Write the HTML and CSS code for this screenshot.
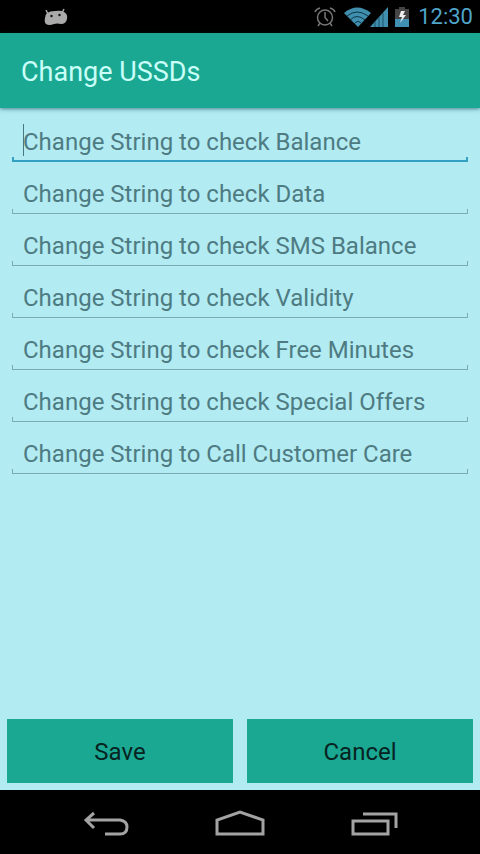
FILE: index.html
```
<!DOCTYPE html>
<html lang="en">
<head>
<meta charset="utf-8">
<meta name="viewport" content="width=device-width, initial-scale=1">
<title>Change USSDs</title>
<link rel="stylesheet" href="styles.css">
</head>
<body>
<div class="status-bar">
  <svg class="notification" width="24" height="18" viewBox="0 0 24 18" aria-hidden="true">
    <path d="M2 2L4 6M20 1L18 5" stroke="#aaa" stroke-width="1.500" fill="none"/>
    <path d="M3 5Q6 3 11 3Q17 2 20 4Q24 6 23 11Q22 16 17 16Q13 15 10 16Q5 18 2 16Q0 14 1 10Q1 7 3 5Z" fill="#aaa"/>
    <circle cx="7.500" cy="8" r="1.200" fill="#111"/><circle cx="15.500" cy="7" r="1.200" fill="#111"/>
  </svg>
  <div class="indicators">
    <svg width="22" height="20" viewBox="0 0 22 20" fill="none" stroke="#777" stroke-width="1.5" aria-hidden="true">
      <circle cx="11" cy="10.500" r="7.500"/><path d="M11 5V10.500L14 14M1 5Q2 2 6 1M16 1Q20 2 21 5M6 16L4 19M16 16L18 19"/>
    </svg>
    <svg class="signals" width="46" height="22" viewBox="0 0 46 22" aria-hidden="true">
      <path d="M0 7Q13-4 27 7L14 21Z" fill="#408faf"/>
      <path d="M3 10Q13 2 24 10M6 14Q13 7 21 14M10 18Q14 13 18 18" fill="none" stroke="#0c3547" stroke-width="1"/>
      <path d="M26 21L44 1V21Z" fill="#408faf"/>
      <path d="M31 15V21M35 11V21M39 7V21" stroke="#1c5066" stroke-width="1"/>
    </svg>
    <svg class="battery" width="14" height="20" viewBox="0 0 14 20" aria-hidden="true">
      <path d="M0 2H4V0H10V2H14V20H0Z" fill="#454545"/><path d="M0 12H14V20H0Z" fill="#4090b3"/>
      <path d="M6 4H10L8 8H11L5 16L7 10H4Z" fill="#eee"/>
    </svg>
    <time>12:30</time>
  </div>
</div>
<header class="title-bar"><h1>Change USSDs</h1></header>
<form class="screen">
  <div class="fields">
    <div class="field active"><input type="text" aria-label="Change String to check Balance" placeholder="Change String to check Balance"></div>
    <div class="field"><input type="text" aria-label="Change String to check Data" placeholder="Change String to check Data"></div>
    <div class="field"><input type="text" aria-label="Change String to check SMS Balance" placeholder="Change String to check SMS Balance"></div>
    <div class="field"><input type="text" aria-label="Change String to check Validity" placeholder="Change String to check Validity"></div>
    <div class="field"><input type="text" aria-label="Change String to check Free Minutes" placeholder="Change String to check Free Minutes"></div>
    <div class="field"><input type="text" aria-label="Change String to check Special Offers" placeholder="Change String to check Special Offers"></div>
    <div class="field"><input type="text" aria-label="Change String to Call Customer Care" placeholder="Change String to Call Customer Care"></div>
  </div>
  <div class="actions">
    <button type="button">Save</button>
    <button type="button">Cancel</button>
  </div>
</form>
<nav class="nav-bar">
  <button type="button" aria-label="Back">
    <svg width="48" height="28" viewBox="0 0 48 28"><path d="M12 3L4 10L12 18M4 10H38Q45 11 45 17Q45 24 38 24H23"/></svg>
  </button>
  <button type="button" aria-label="Home">
    <svg width="52" height="28" viewBox="0 0 52 28"><path d="M3 24V10L26 2L49 10V24Z"/></svg>
  </button>
  <button type="button" aria-label="Recent apps">
    <svg width="48" height="28" viewBox="0 0 48 28"><path d="M3 11H38V24H3ZM13 4H46V18"/></svg>
  </button>
</nav>
</body>
</html>
```
FILE: styles.css
```
* {
  box-sizing: border-box;
}

body {
  margin: 0;
  min-height: 100vh;
  display: flex;
  flex-direction: column;
  background: #b2ebf2;
  font-family: Roboto, "Noto Sans", sans-serif;
}

button,
input {
  margin: 0;
  border: 0;
  border-radius: 0;
  font: inherit;
}

svg {
  display: block;
}

.status-bar {
  height: 33px;
  padding: 0 7px 0 44px;
  display: flex;
  align-items: center;
  justify-content: space-between;
  background: #000;
}

.indicators {
  display: flex;
  align-items: center;
  color: #4fa5c8;
  font-size: 22px;
}

.signals {
  margin-left: 8px;
}

.battery {
  margin: 0 9px 0 5px;
}

.title-bar {
  height: 75px;
  padding: 2px 21px 0;
  display: flex;
  align-items: center;
  background: #1ba893;
  box-shadow: 0 1px 4px rgba(0, 60, 70, 0.6);
}

.title-bar h1 {
  margin: 0;
  color: #c9fff8;
  font-size: 27px;
  font-weight: 400;
}

.screen {
  flex: 1;
  display: flex;
  flex-direction: column;
  justify-content: space-between;
}

.fields {
  padding: 2px 12px;
}

.field {
  --line: #7aabb2;
  --weight: 1px;
  position: relative;
  height: 52px;
  padding-top: 10px;
  background:
    linear-gradient(var(--line), var(--line)) left bottom / 100% var(--weight) no-repeat,
    linear-gradient(var(--line), var(--line)) left bottom / var(--weight) 5px no-repeat,
    linear-gradient(var(--line), var(--line)) right bottom / var(--weight) 5px no-repeat;
}

.field.active {
  --line: #359fc4;
  --weight: 2px;
}

.field.active::before {
  content: "";
  position: absolute;
  left: 11px;
  top: 14px;
  width: 1px;
  height: 32px;
  background: #48777d;
}

.field input {
  display: block;
  width: 100%;
  height: 42px;
  padding: 2px 11px 0;
  background: transparent;
  outline: none;
  color: #163c40;
  font-size: 24px;
}

.field input::placeholder {
  color: #4e7b82;
  opacity: 1;
}

.actions {
  display: grid;
  grid-template-columns: 1fr 1fr;
  gap: 14px;
  padding: 7px;
}

.actions button {
  height: 64px;
  padding: 2px 0 0;
  background: #1ba893;
  color: #07231f;
  font-size: 24px;
}

.nav-bar {
  height: 64px;
  display: flex;
  align-items: center;
  justify-content: center;
  gap: 84px;
  background: #000;
}

.nav-bar button {
  padding: 4px 0 0;
  background: transparent;
}

.nav-bar svg {
  fill: none;
  stroke: #a3a3a3;
  stroke-width: 3;
}
```
